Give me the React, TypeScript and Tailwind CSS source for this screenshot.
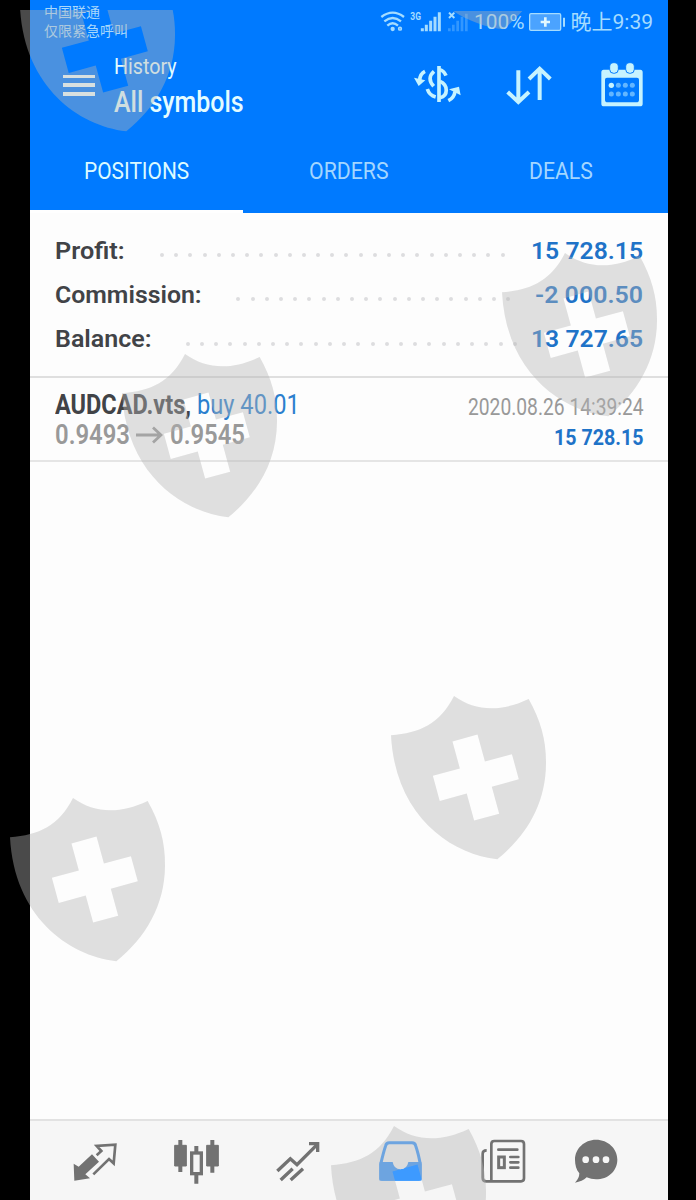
import React, { useLayoutEffect, useRef, useState } from "react";

const SHIELD =
  "M33 165C120 158 180 130 222 47C285 92 360 97 446 56C482 120 499 180 498 250C497 370 440 465 352 537C205 520 45 400 33 165Z" +
  "M217.400 183.400L292.600 162.800L314.800 243.800L395.800 221.600L416.400 296.800L335.400 319L357.600 400L282.400 420.600L260.200 339.600L179.200 361.800L158.600 286.600L239.600 264.400Z";

const shields = [
  { x: 19.5, y: -32, clip: 10 },
  { x: 397, y: -134, clip: 11 },
  { x: 502.3, y: 252.5, clip: 0 },
  { x: 122, y: 354.3, clip: 0 },
  { x: 391, y: 695.7, clip: 0 },
  { x: 10, y: 798, clip: 0 },
  { x: 331, y: 1126.4, clip: 0 },
];

const totals = [
  { label: "Profit:", lw: 70, value: "15 728.15", vw: 112, dots: 25, start: 160, end: 504.5 },
  { label: "Commission:", lw: 147, value: "-2 000.50", vw: 108, dots: 20, start: 236.3, end: 510.3 },
  { label: "Balance:", lw: 97, value: "13 727.65", vw: 112, dots: 24, start: 185.7, end: 517 },
];

// Squeezes a line of text to the given width, for condensed lettering
const Fit = ({ w, className = "", children }: { w: number; className?: string; children: React.ReactNode }) => {
  const ref = useRef<HTMLSpanElement>(null);
  const [scale, setScale] = useState(1);

  useLayoutEffect(() => {
    if (ref.current) setScale(w / ref.current.offsetWidth);
  }, [w]);

  return (
    <span className={`block shrink-0 whitespace-nowrap ${className}`} style={{ width: w }}>
      <span ref={ref} className="inline-block origin-left" style={{ transform: `scaleX(${scale})` }}>
        {children}
      </span>
    </span>
  );
};

const StatusBar = () => (
  <div className="flex h-[44px] justify-between pl-[14px] pr-[14px]">
    <div className="pt-[3px] text-[14px] leading-[19px] text-[#a9d8fb]">
      <Fit w={56}>中国联通</Fit>
      <Fit w={84}>仅限紧急呼叫</Fit>
    </div>
    <div className="flex h-[44px] items-center text-[#a5dcff]">
      <svg className="h-[22px] w-[92px]" viewBox="30 32 276 66" fill="none" stroke="currentColor">
        <g strokeWidth="7">
          <path d="M34 50Q68 24 102 50M43 63Q68 43 93 63M52 76Q68 62 84 76" />
          <circle cx="68" cy="86" r="3" fill="currentColor" />
          <circle cx="90" cy="85" r="4" strokeWidth="5" />
        </g>
        <text x="121" y="59" fontSize="30" fontWeight="700" textLength="32" lengthAdjust="spacingAndGlyphs" fill="currentColor" stroke="none">
          3G
        </text>
        <path d="M157 93V84M169 93V73M182 93V61M195 93V49M208 93V36" strokeWidth="9" />
        <path d="M237 37L253 53M253 37L237 53" strokeWidth="6" />
        <path d="M238 93V84M250 93V73M263 93V61M276 93V49M289 93V40" strokeWidth="8" opacity=".3" />
      </svg>
      <Fit w={50} className="ml-[1.5px] text-[20px]">100%</Fit>
      <svg className="ml-[5px] h-[18px] w-[37px]" viewBox="474 39 111 54" fill="none" stroke="currentColor">
        <rect x="476" y="41" width="93" height="50" rx="4" strokeWidth="4" fill="#4ba3ff" />
        <path d="M579 53V80" strokeWidth="6" />
        <path d="M523 52V80M509 66H537" strokeWidth="8" stroke="#e2f8ff" />
      </svg>
      <Fit w={83} className="ml-[5px] pt-[2px] text-[21px]">晚上9:39</Fit>
    </div>
  </div>
);

const Toolbar = () => (
  <div className="flex h-[86px] pl-[33px] pr-[21.7px] text-[#c6f3ff]">
    <div className="flex w-[32px] flex-col gap-[5.400px] pt-[30.500px]">
      <i className="h-[3.600px] bg-[#f2ffff]" />
      <i className="h-[3.600px] bg-[#f2ffff]" />
      <i className="h-[3.600px] bg-[#f2ffff]" />
    </div>
    <div className="ml-[19px] flex-1 text-[#e4fcff]">
      <Fit w={63} className="mt-[9px] text-[22.5px] leading-[26px]">History</Fit>
      <Fit w={130} className="mt-[5px] text-[29px] leading-[36px] font-medium">All symbols</Fit>
    </div>
    <div className="flex gap-[44.5px] pt-[16.7px]">
      <svg className="size-[48px]" viewBox="130 182 144 144" fill="none" stroke="currentColor" strokeWidth="11">
        <path d="M208 197V305" />
        <path d="M193 213Q170 233 192 258" />
        <path d="M211 208Q223 211 229 226" />
        <path d="M211 243C236 254 236 286 211 292" />
        <path d="M173 266Q179 285 198 290" />
        <path d="M166 213Q151 220 150 240" />
        <path d="M133 232L167 240L147 257Z" fill="currentColor" stroke="none" />
        <path d="M236 301Q254 292 256 273" />
        <path d="M238 267L268 259L273 285Z" fill="currentColor" stroke="none" />
      </svg>
      <svg className="size-[48px]" viewBox="407 182 144 144" fill="none" stroke="currentColor" strokeWidth="12">
        <path d="M447 210V305M415 275L447 305L479 275" />
        <path d="M511 299V206M479 236L511 205L543 236" />
      </svg>
      <svg className="size-[48px]" viewBox="685 182 144 144" fill="currentColor">
        <path fillRule="evenodd" d="M702 208H812Q819 208 819 216V310Q819 318 811 318H703Q695 318 695 310V216Q695 208 702 208ZM712 232Q706 232 706 238V298Q706 306 714 306H800Q808 306 808 298V238Q808 232 802 232Z" />
        <rect x="720" y="187" width="26" height="32" rx="12" stroke="#007aff" strokeWidth="3" />
        <rect x="768" y="187" width="26" height="32" rx="12" stroke="#007aff" strokeWidth="3" />
        <circle cx="725" cy="255" r="8" />
        <g opacity=".5">
          {[746, 767, 788].map((x) => (
            <circle key={x} cx={x} cy="255" r="7.5" />
          ))}
          {[725, 746, 767, 788].map((x) => (
            <circle key={x} cx={x} cy="281" r="7.5" />
          ))}
        </g>
      </svg>
    </div>
  </div>
);

const Tabs = () => (
  <div className="grid h-[82.5px] grid-cols-3 grid-rows-[82.5px] text-[24.5px] leading-[82px] text-[#a3d6ff]">
    <div className="flex justify-center border-b-[3px] border-white text-[#dcfaff]">
      <Fit w={105}>POSITIONS</Fit>
    </div>
    <div className="flex justify-center">
      <Fit w={80}>ORDERS</Fit>
    </div>
    <div className="flex justify-center">
      <Fit w={64}>DEALS</Fit>
    </div>
  </div>
);

const BottomNav = () => (
  <div className="flex h-[81px] gap-[54px] border-t-2 border-[#e2e2e2] bg-[#f6f6f6] pt-[16.7px] pl-[40.7px] text-[#727272]">
    <svg className="size-[48px] shrink-0" viewBox="122 98 144 144" fill="none" stroke="currentColor" strokeWidth="8">
      <path d="M130 175L145 184L185 147L206 169L165 207L179 219L132 226Z" fill="currentColor" stroke="none" />
      <path d="M199 150L213 137L199 122L255 118L250 174L236 161L189 207" />
    </svg>
    <svg className="size-[48px] shrink-0" viewBox="428 98 144 144" fill="none" stroke="currentColor">
      <path d="M450 104V200M546 104V202M498 122V140M498 206V235" strokeWidth="12" />
      <path d="M433 120H468V182H433ZM529 120H564V182H529Z" fill="currentColor" strokeWidth="3" />
      <rect x="484" y="143" width="29" height="62" strokeWidth="10" />
    </svg>
    <svg className="size-[48px] shrink-0" viewBox="734 98 144 144" fill="none" stroke="currentColor" strokeWidth="10">
      <path d="M741 197L780 160L800 178L861 117M751 224L787 190M781 224L818 190" />
      <path d="M836 115H862V140" />
    </svg>
    <svg className="size-[48px] shrink-0" viewBox="140 98 144 144" fill="none" stroke="#3d9aff" strokeWidth="9">
      <path d="M151 222V177C156 155 160 138 166 121Q168 112 177 112H245Q254 112 256 121C262 138 266 155 270 177V222Z" strokeLinejoin="round" />
      <path d="M148 170H187Q191 192 210 192Q230 192 234 170H273V219Q273 226 266 226H155Q148 226 148 219Z" fill="#3d9aff" stroke="none" />
    </svg>
    <svg className="size-[48px] shrink-0" viewBox="446 98 144 144" fill="none" stroke="currentColor" strokeWidth="8">
      <path d="M483 228V116Q483 107 492 107H572Q581 107 581 116V219Q581 228 572 228H468Q457 228 457 217V145Q457 135 469 135" />
      <path d="M504 133H561M540 155H564M540 171H564M540 187H564" strokeLinecap="round" />
      <rect x="505" y="155" width="17" height="32" strokeWidth="9" />
    </svg>
    <svg className="-ml-[8.7px] size-[48px] shrink-0" viewBox="726 98 144 144" fill="currentColor">
      <path d="M798 103C834 103 862 130 862 163C862 197 834 222 798 222C788 222 779 220 770 216Q757 229 735 232Q748 219 748 204C739 193 735 179 735 163C735 130 763 103 798 103Z" />
      {[767, 798, 828].map((x) => (
        <circle key={x} cx={x} cy="163" r="10" fill="#f6f6f6" />
      ))}
    </svg>
  </div>
);

export default function App() {
  return (
    <div className="relative h-[1200px] w-[696px] overflow-hidden bg-black pl-[30px] font-['Roboto','Noto_Sans_CJK_SC',sans-serif]">
      <div className="flex h-full w-[637.5px] flex-col bg-[#fdfdfd]">
        <div className="bg-[#007aff]">
          <StatusBar />
          <Toolbar />
          <Tabs />
        </div>

        <div className="h-[165px] border-b-2 border-[#dfdfdf] pt-[16px] pr-[24.5px] pl-[24.5px]">
          {totals.map((t) => (
            <div key={t.label} className="flex h-[44.3px] text-[24.5px] leading-[44px] font-semibold">
              <Fit w={t.lw} className="text-[#414347]">{t.label}</Fit>
              <div
                className="flex justify-between pt-[24.5px]"
                style={{ marginLeft: t.start - 54.5 - t.lw, width: t.end - t.start }}
              >
                {Array.from({ length: t.dots }, (_, i) => (
                  <i key={i} className="size-[4px] rounded-full bg-[#dddddf]" />
                ))}
              </div>
              <Fit w={t.vw} className="ml-auto text-[#1f73c8]">{t.value}</Fit>
            </div>
          ))}
        </div>

        <div className="flex h-[84.5px] justify-between border-b-2 border-[#e5e5e5] pt-[12px] pr-[24.5px] pl-[24.5px]">
          <div className="text-[28px] leading-[30px]">
            <div className="flex">
              <Fit w={136} className="font-bold text-[#414347]">AUDCAD.vts,</Fit>
              <Fit w={103} className="ml-[6px] text-[#2b7fce]">buy 40.01</Fit>
            </div>
            <div className="flex items-center font-semibold text-[#999999]">
              <Fit w={75}>0.9493</Fit>
              <svg className="mx-[6.5px] h-[18px] w-[27px]" viewBox="0 0 27 18" fill="none" stroke="currentColor" strokeWidth="2.8">
                <path d="M0 9H25M17 1.500L25 9L17 16.500" />
              </svg>
              <Fit w={75}>0.9545</Fit>
            </div>
          </div>
          <div className="flex flex-col items-end pt-[2px]">
            <Fit w={175.5} className="text-[24px] leading-[30px] text-[#999999]">2020.08.26 14:39:24</Fit>
            <Fit w={89} className="text-[22.5px] leading-[30px] font-bold text-[#1f73c8]">15 728.15</Fit>
          </div>
        </div>

        <div className="flex-1" />
        <BottomNav />
      </div>

      {shields.map((s) => (
        <div
          key={s.y}
          className="pointer-events-none absolute overflow-hidden"
          style={{ left: s.x, top: Math.max(s.y, s.clip), width: 156, height: s.y + 164 - Math.max(s.y, s.clip) }}
        >
          <svg
            className="h-[164px] w-[156px]"
            viewBox="33 47 468 492"
            style={{ marginTop: Math.min(0, s.y - s.clip) }}
          >
            <path d={SHIELD} fill="#b3b3b3" fillOpacity=".41" fillRule="evenodd" />
          </svg>
        </div>
      ))}
    </div>
  );
}
